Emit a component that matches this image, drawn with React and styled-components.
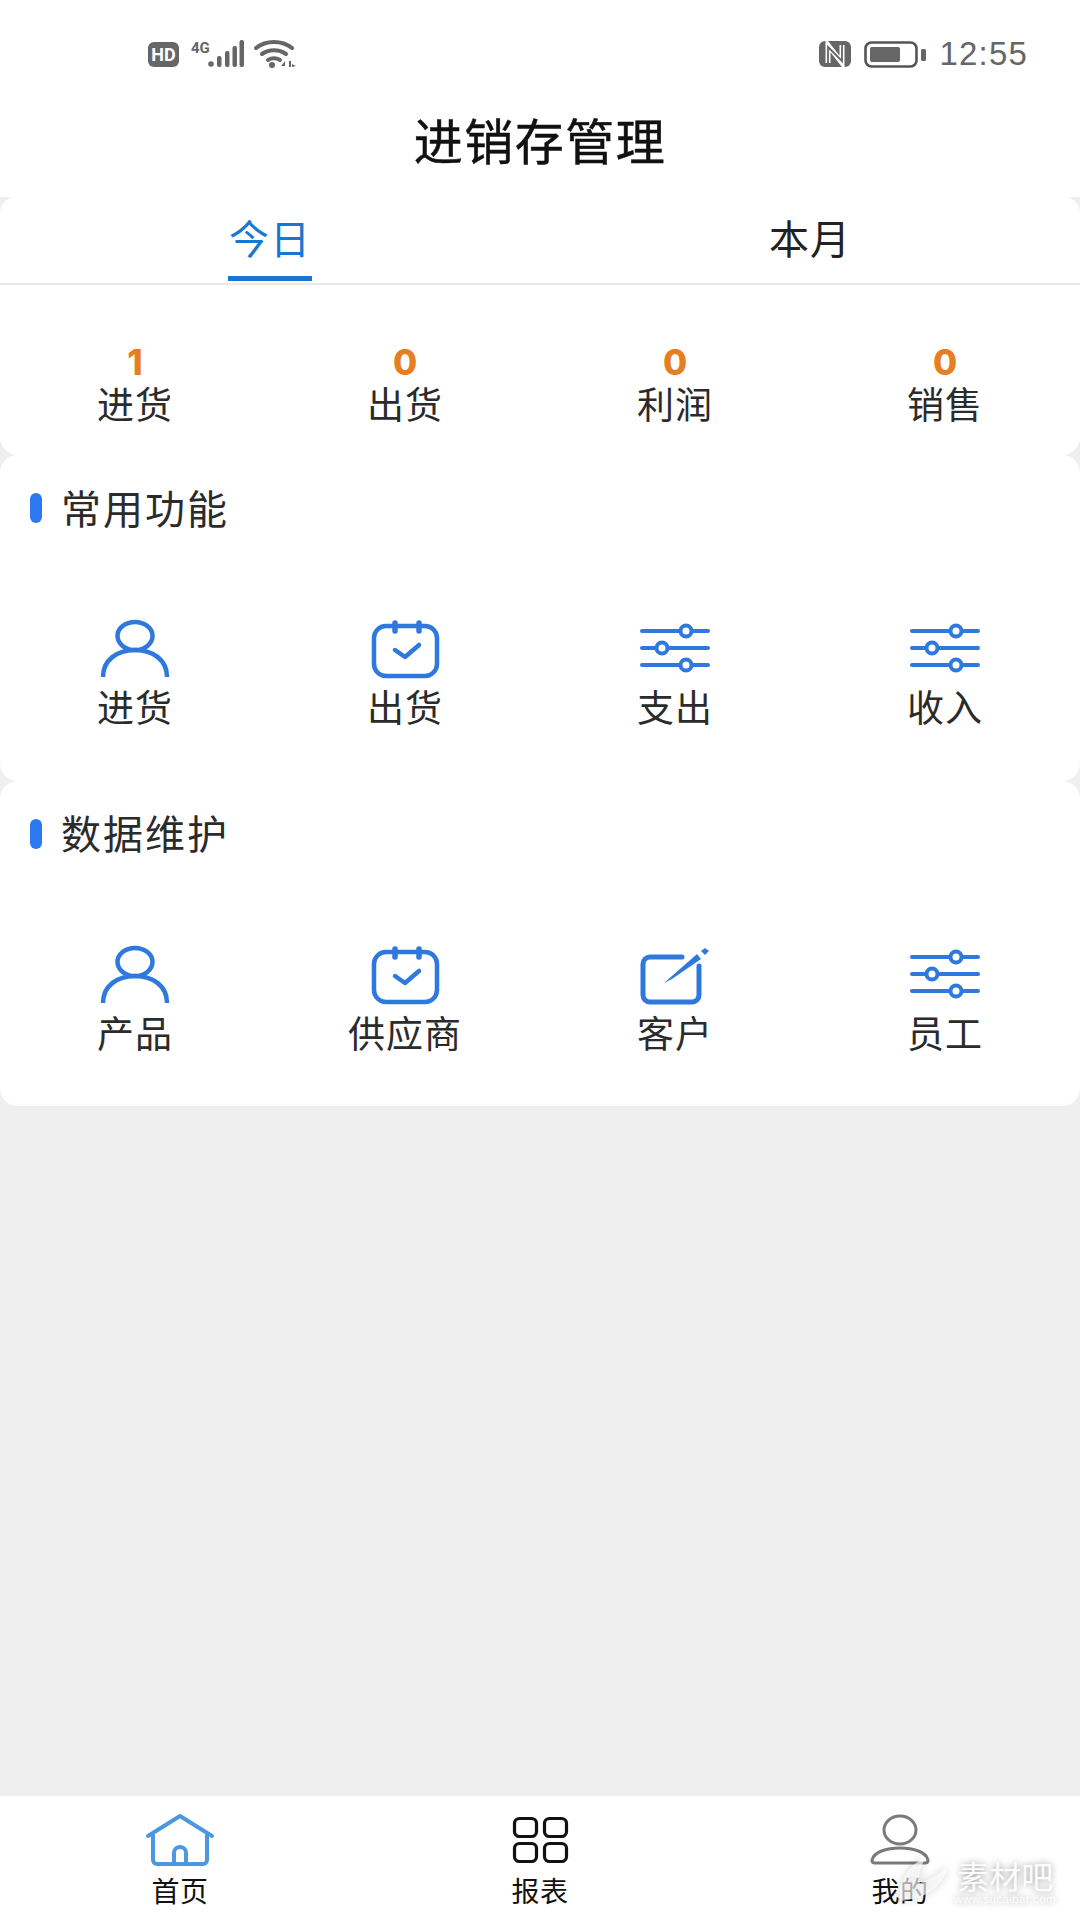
import styled, { createGlobalStyle } from 'styled-components'

const GlobalStyle = createGlobalStyle`
  html, body { margin: 0; padding: 0; background: #efefef; }
  * { box-sizing: border-box; }
  body { font-family: "Noto Sans CJK SC", "Noto Sans", sans-serif; }
`

const Page = styled.div`
  position: relative;
  display: flex;
  flex-direction: column;
  width: 1080px;
  height: 1920px;
  background: #efefef;
  overflow: hidden;
`

const Top = styled.div`
  height: 197px;
  margin-bottom: -1px;
  background: #fff;
  flex: none;
`

const StatusBar = styled.div`
  display: flex;
  align-items: center;
  justify-content: space-between;
  height: 108px;
  padding: 0 52px 0 148px;
`

const StatusGroup = styled.div`
  display: flex;
  align-items: center;
`

const HdBadge = styled.span`
  display: flex;
  align-items: center;
  justify-content: center;
  width: 31px;
  height: 25px;
  border-radius: 6px;
  background: #666;
  color: #fff;
  font: 700 18px "Roboto", sans-serif;
`

const NetLabel = styled.span`
  align-self: flex-start;
  margin: -1px -2px 0 12px;
  color: #666;
  font: 700 15px "Roboto", sans-serif;
`

const Clock = styled.span`
  margin-left: 13px;
  color: #666;
  font: 400 33px "Liberation Sans", sans-serif;
  letter-spacing: 1.2px;
`

const Title = styled.h1`
  margin: 0;
  height: 89px;
  padding-top: 3px;
  color: #111;
  font-size: 49px;
  font-weight: 400;
  -webkit-text-stroke: 0.5px #111;
  line-height: 56px;
  letter-spacing: 1.5px;
  text-align: center;
`

const Card = styled.section`
  flex: none;
  height: ${({ $height }) => $height}px;
  background: #fff;
  border-radius: 18px;
`

const Tabs = styled.div`
  display: grid;
  grid-template-columns: 1fr 1fr;
  height: 89px;
  border-bottom: 2px solid #e8e8e8;
`

const Tab = styled.div`
  position: relative;
  padding-top: 15px;
  color: ${({ $active }) => ($active ? '#1976d2' : '#222')};
  font-size: 40px;
  line-height: 52px;
  letter-spacing: 1px;
  text-align: center;

  &::after {
    content: '';
    display: ${({ $active }) => ($active ? 'block' : 'none')};
    position: absolute;
    left: 50%;
    bottom: 2px;
    width: 84px;
    height: 5px;
    margin-left: -42px;
    background: #1976d2;
  }
`

const Row = styled.div`
  display: grid;
  grid-template-columns: repeat(4, 1fr);
`

const Stats = styled(Row)`
  padding-top: 60px;
`

const Stat = styled.div`
  display: flex;
  flex-direction: column;
  align-items: center;
`

const StatValue = styled.span`
  color: #e67e22;
  font: 800 35px/34px "Inter", sans-serif;
`

const Label = styled.span`
  color: #2b2b2b;
  font-size: 37px;
  line-height: 48px;
  letter-spacing: 1px;
  white-space: nowrap;
`

const SectionHead = styled.div`
  display: flex;
  align-items: center;
  height: 106px;
  padding-left: 30px;
`

const SectionMark = styled.span`
  width: 12px;
  height: 30px;
  margin-right: 19px;
  border-radius: 6px;
  background: #2d78f0;
`

const SectionTitle = styled.h2`
  margin: -3px 0 0;
  color: #2b2b2b;
  font-size: 40px;
  font-weight: 400;
  letter-spacing: 2px;
`

const Feature = styled.div`
  display: flex;
  flex-direction: column;
  align-items: center;
  padding-top: 58px;
  gap: 3px;
`

const IconBox = styled.svg`
  display: block;
  width: 72px;
  height: 60px;
  flex: none;
`

const Spacer = styled.div`
  flex: 1;
`

const BottomNav = styled.nav`
  display: grid;
  grid-template-columns: repeat(3, 1fr);
  flex: none;
  height: 124px;
  background: #fff;
`

const NavItem = styled.div`
  display: flex;
  flex-direction: column;
  align-items: center;
  padding-top: 17px;
`

const NavLabel = styled.span`
  margin-top: -1px;
  color: #111;
  font-size: 28px;
  line-height: 36px;
  letter-spacing: 0.5px;
`

const Watermark = styled.div`
  position: absolute;
  right: 24px;
  bottom: 14px;
  display: flex;
  flex-direction: column;
  align-items: center;
  color: rgba(255, 255, 255, 0.95);
  text-shadow: 0 0 7px rgba(0, 0, 0, 0.4);
`

const WatermarkName = styled.span`
  font-size: 32px;
  font-weight: 400;
  line-height: 34px;
`

const WatermarkUrl = styled.span`
  font: 400 11.5px/14px "Liberation Sans", sans-serif;
  letter-spacing: 0.4px;
`

const WatermarkLogo = styled.svg`
  position: absolute;
  right: 130px;
  bottom: 17px;
  width: 54px;
  height: 50px;
  filter: drop-shadow(0 0 4px rgba(0, 0, 0, 0.25));
`

const BLUE = '#2f78de'

const PersonIcon = () => (
  <IconBox viewBox="0 0 72 60" fill="none" stroke={BLUE} strokeWidth="4.5">
    <ellipse cx="36" cy="17" rx="17.5" ry="14" />
    <path d="M4 58c0-17 14-27 32-27s32 10 32 27" />
  </IconBox>
)

const CalendarIcon = () => (
  <IconBox viewBox="0 0 72 60" fill="none" stroke={BLUE} strokeWidth="4.5" strokeLinecap="round" strokeLinejoin="round">
    <rect x="5" y="7" width="63" height="50" rx="12" />
    <path d="M26 4v8M50 4v8" strokeWidth="5.5" />
    <path d="M26 31l10 7 14-12" />
  </IconBox>
)

const SlidersIcon = () => (
  <IconBox viewBox="0 0 72 60" fill="none" stroke={BLUE} strokeWidth="4" strokeLinecap="round">
    <path d="M3 12h38M53 12h16M3 29h14M29 29h40M3 46h38M53 46h16" />
    <circle cx="47" cy="12" r="5.5" />
    <circle cx="23" cy="29" r="5.5" />
    <circle cx="47" cy="46" r="5.5" />
  </IconBox>
)

const EditIcon = () => (
  <IconBox viewBox="0 0 72 60" fill="none" stroke={BLUE} strokeWidth="5" strokeLinejoin="round">
    <path d="M43 12H11a7 7 0 0 0-7 7v31a7 7 0 0 0 7 7h42a7 7 0 0 0 7-7V21" strokeLinecap="round" />
    <path d="M25 38l33-29 4 5-29 20z" fill={BLUE} stroke="none" />
    <path d="M62 6l4-3 4 3-4 4z" fill={BLUE} stroke="none" />
  </IconBox>
)

const HomeIcon = () => (
  <IconBox viewBox="0 0 72 60" fill="none" stroke="#4a98e0" strokeWidth="4" strokeLinecap="round" strokeLinejoin="round">
    <path d="M4 23L36 3l32 20" />
    <path d="M9 22v25a4 4 0 0 0 4 4h46a4 4 0 0 0 4-4V22" />
    <path d="M30 50V40a6 6 0 0 1 12 0v10" />
  </IconBox>
)

const GridIcon = () => (
  <IconBox viewBox="0 0 72 60" fill="none" stroke="#111" strokeWidth="3.2">
    <rect x="10.5" y="5.5" width="22" height="18" rx="5" />
    <rect x="40.5" y="5.5" width="22" height="18" rx="5" />
    <rect x="10.5" y="30.5" width="22" height="18" rx="5" />
    <rect x="40.5" y="30.5" width="22" height="18" rx="5" />
  </IconBox>
)

const MeIcon = () => (
  <IconBox viewBox="0 0 72 60" fill="none" stroke="#7a7a7a" strokeWidth="3">
    <ellipse cx="36" cy="17" rx="16" ry="14" />
    <path d="M8 47c2-8 14-12 28-12s26 4 28 12c0 2-1 3-3 3H11c-2 0-3-1-3-3z" />
  </IconBox>
)

const SignalIcon = () => (
  <svg width="36" height="28" viewBox="0 0 36 28" fill="#666">
    <circle cx="3" cy="24" r="2.8" />
    <rect x="9" y="16" width="4.5" height="11" rx="2" />
    <rect x="17" y="11" width="4.5" height="16" rx="2" />
    <rect x="24.5" y="6" width="4.5" height="21" rx="2" />
    <rect x="31.5" y="0" width="4.5" height="27" rx="2" />
  </svg>
)

const WifiIcon = () => (
  <svg width="42" height="28" viewBox="0 0 42 28" fill="none" stroke="#666" strokeWidth="4" strokeLinecap="round" style={{ marginLeft: 10 }}>
    <path d="M2 8c10-8 26-8 36 0" />
    <path d="M8 14c7-5 17-5 24 0" />
    <path d="M14 20c3.5-2 8.5-2 12 0" />
    <circle cx="18" cy="25" r="3" fill="#666" stroke="none" />
    <path d="M31 21l-4 5h4zM35 21v6h2v-6zM38 24l4 2-4 1z" fill="#666" stroke="none" />
  </svg>
)

const NfcIcon = () => (
  <svg width="32" height="26" viewBox="0 0 32 26" fill="none">
    <rect width="32" height="26" rx="6" fill="#666" />
    <path d="M9 22V4l14 18V4" stroke="#fff" strokeWidth="5" />
    <path d="M9 24V6l14 14V2" stroke="#666" strokeWidth="1.8" />
  </svg>
)

const BatteryIcon = () => (
  <svg width="62" height="27" viewBox="0 0 62 27" fill="none" style={{ marginLeft: 13 }}>
    <rect x="1.5" y="1.5" width="51" height="24" rx="6" stroke="#555" strokeWidth="2.6" />
    <rect x="6" y="6" width="30" height="15" rx="2" fill="#666" />
    <rect x="57" y="8" width="5" height="12" rx="1.5" fill="#666" />
  </svg>
)

const STATS = [
  { value: '1', label: '进货' },
  { value: '0', label: '出货' },
  { value: '0', label: '利润' },
  { value: '0', label: '销售' },
]

const SECTIONS = [
  {
    title: '常用功能',
    items: [
      { label: '进货', Icon: PersonIcon },
      { label: '出货', Icon: CalendarIcon },
      { label: '支出', Icon: SlidersIcon },
      { label: '收入', Icon: SlidersIcon },
    ],
  },
  {
    title: '数据维护',
    items: [
      { label: '产品', Icon: PersonIcon },
      { label: '供应商', Icon: CalendarIcon },
      { label: '客户', Icon: EditIcon },
      { label: '员工', Icon: SlidersIcon },
    ],
  },
]

const NAV = [
  { label: '首页', Icon: HomeIcon },
  { label: '报表', Icon: GridIcon },
  { label: '我的', Icon: MeIcon },
]

export default function App() {
  return (
    <Page>
      <GlobalStyle />
      <Top>
        <StatusBar>
          <StatusGroup>
            <HdBadge>HD</HdBadge>
            <NetLabel>4G</NetLabel>
            <SignalIcon />
            <WifiIcon />
          </StatusGroup>
          <StatusGroup>
            <NfcIcon />
            <BatteryIcon />
            <Clock>12:55</Clock>
          </StatusGroup>
        </StatusBar>
        <Title>进销存管理</Title>
      </Top>

      <Card $height={259}>
        <Tabs>
          <Tab $active>今日</Tab>
          <Tab>本月</Tab>
        </Tabs>
        <Stats>
          {STATS.map((stat, index) => (
            <Stat key={index}>
              <StatValue>{stat.value}</StatValue>
              <Label>{stat.label}</Label>
            </Stat>
          ))}
        </Stats>
      </Card>

      {SECTIONS.map((section) => (
        <Card key={section.title} $height={325.5}>
          <SectionHead>
            <SectionMark />
            <SectionTitle>{section.title}</SectionTitle>
          </SectionHead>
          <Row>
            {section.items.map(({ label, Icon }) => (
              <Feature key={label}>
                <Icon />
                <Label>{label}</Label>
              </Feature>
            ))}
          </Row>
        </Card>
      ))}

      <Spacer />

      <BottomNav>
        {NAV.map(({ label, Icon }) => (
          <NavItem key={label}>
            <Icon />
            <NavLabel>{label}</NavLabel>
          </NavItem>
        ))}
      </BottomNav>

      <WatermarkLogo viewBox="0 0 54 50" fill="rgba(255,255,255,0.65)">
        <path d="M4 48C2 30 12 12 30 4c-6 10-8 18-6 26 6-2 12-4 28-16C46 34 30 46 4 48z" />
      </WatermarkLogo>
      <Watermark>
        <WatermarkName>素材吧</WatermarkName>
        <WatermarkUrl>www.sucaibar.com</WatermarkUrl>
      </Watermark>
    </Page>
  )
}
